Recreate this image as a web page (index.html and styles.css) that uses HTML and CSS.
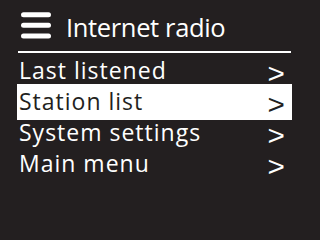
FILE: index.html
```html
<!DOCTYPE html>
<html>
<head>
<meta charset="utf-8">
<link rel="stylesheet" href="styles.css">
</head>
<body>
<div class="screen">
  <div class="header">
    <svg class="menu-icon" width="30" height="28" viewBox="0 0 30 28">
      <line x1="2.5" y1="2.7" x2="27.5" y2="2.7" stroke="#fff" stroke-width="5" stroke-linecap="round"/>
      <line x1="2.5" y1="13.2" x2="27.5" y2="13.2" stroke="#fff" stroke-width="5" stroke-linecap="round"/>
      <line x1="2.5" y1="24" x2="27.5" y2="24" stroke="#fff" stroke-width="5" stroke-linecap="round"/>
    </svg>
    <span class="title">Internet radio</span>
  </div>
  <div class="list">
    <div class="row"><span>Last listened</span><span class="chev">&gt;</span></div>
    <div class="row selected"><span>Station list</span><span class="chev">&gt;</span></div>
    <div class="row"><span>System settings</span><span class="chev">&gt;</span></div>
    <div class="row"><span>Main menu</span><span class="chev">&gt;</span></div>
  </div>
</div>
</body>
</html>
```
FILE: styles.css
```css
html, body {
  margin: 0;
  padding: 0;
  background: #231f20;
}
.screen {
  width: 299px;
  height: 227px;
  background: #231f20;
  color: #fff;
  font-family: "Open Sans", "DejaVu Sans", sans-serif;
  overflow: hidden;
}
.header {
  display: flex;
  align-items: flex-start;
  margin: 0 8px 0 18px;
  padding: 0 0 0 3px;
  height: 51px;
  border-bottom: 2.5px solid #fff;
}
.menu-icon {
  display: block;
  margin-top: 12px;
}
.title {
  margin-top: 9px;
  margin-left: 15px;
  font-size: 25.5px;
  line-height: 36px;
  letter-spacing: -0.35px;
}
.list {
  margin-top: 2px;
}
.row {
  display: flex;
  justify-content: space-between;
  margin: 0 7px 0 17px;
  padding: 0 7px 0 2px;
  height: 31px;
  font-size: 23px;
  line-height: 31px;
  letter-spacing: 1px;
}
.row.selected {
  background: #fff;
  color: #231f20;
  margin-top: -2.5px;
  margin-bottom: -2.5px;
  padding-top: 2.5px;
  padding-bottom: 2.5px;
}
.chev {
  font-family: "Liberation Sans", Arial, sans-serif;
  font-size: 27px;
  letter-spacing: 0;
  padding-top: 4px;
  transform: scaleX(1.1);
  transform-origin: 100% 50%;
}
```
